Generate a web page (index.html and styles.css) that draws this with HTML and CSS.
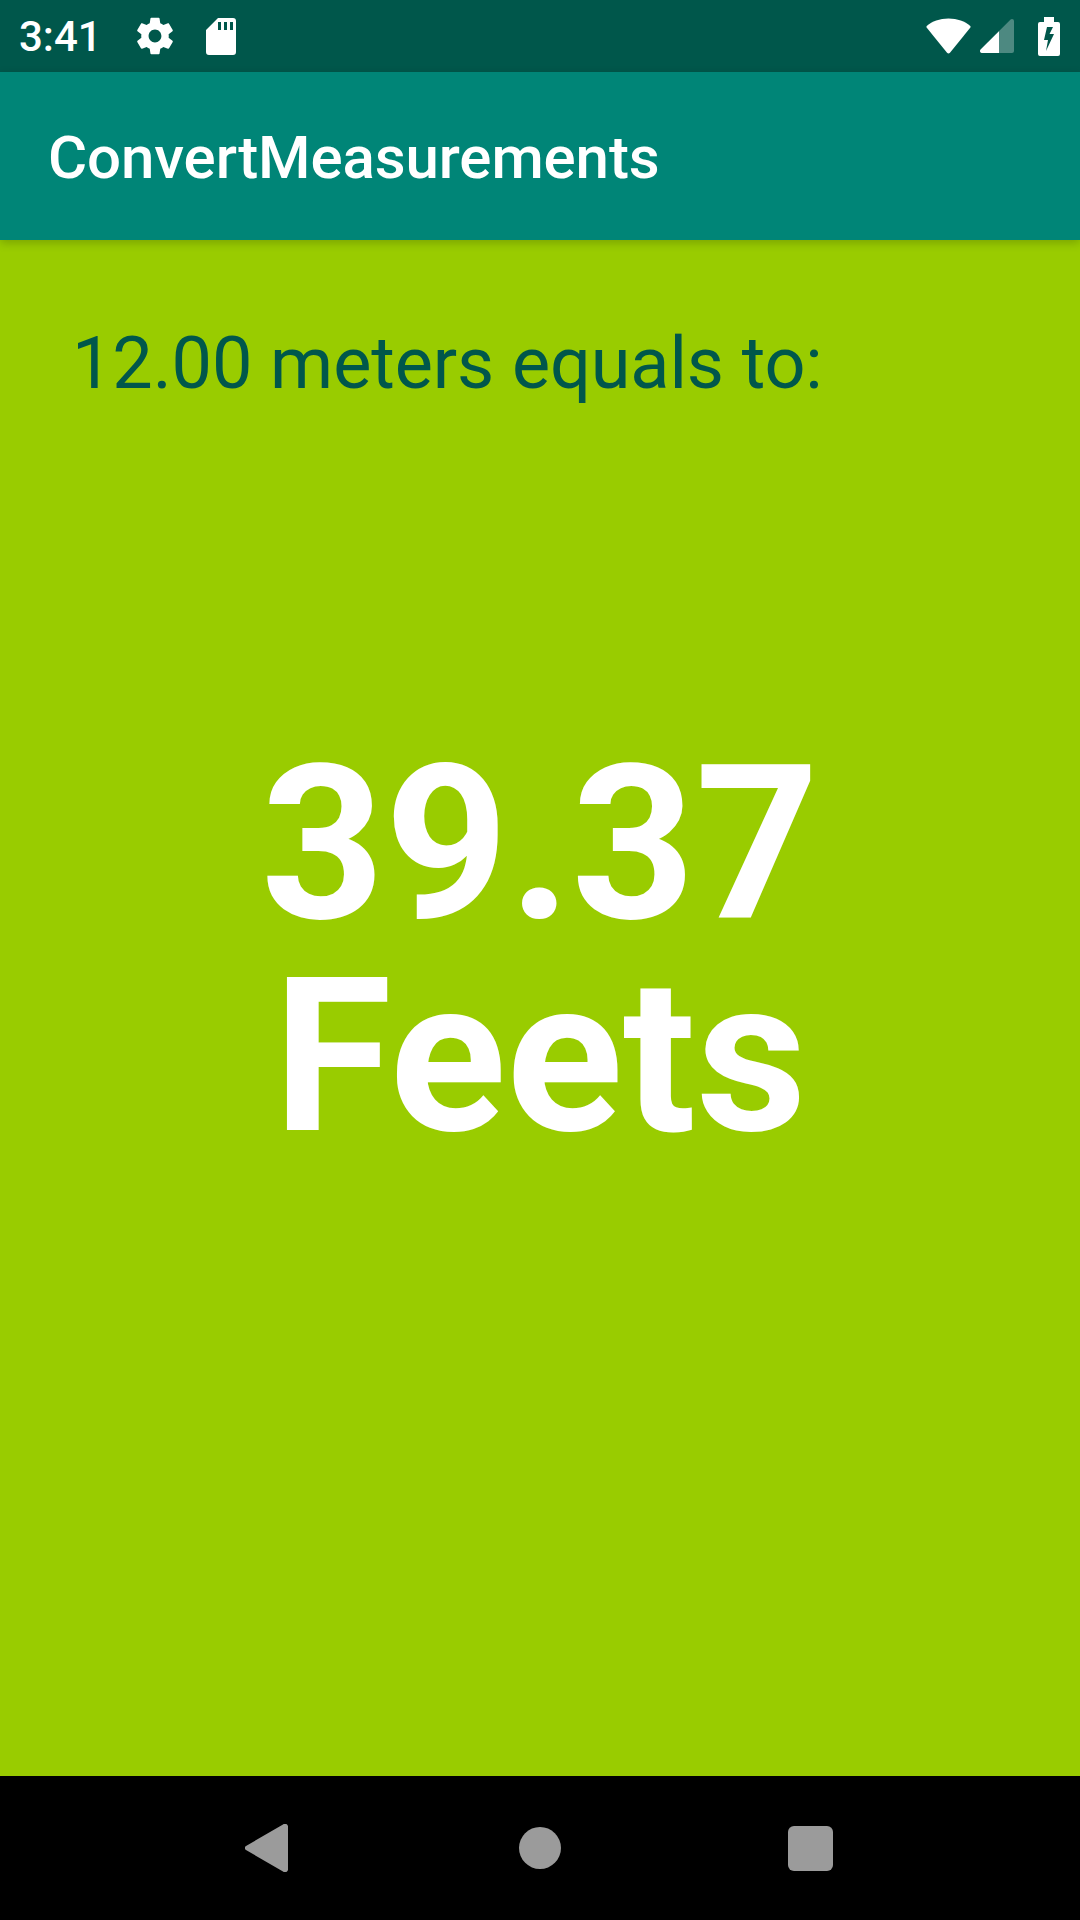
FILE: index.html
```html
<!DOCTYPE html>
<html lang="en">
<head>
  <meta charset="UTF-8" />
  <meta name="viewport" content="width=device-width, initial-scale=1.0">
  <title>ConvertMeasurements</title>
  <link rel="stylesheet" href="styles.css">
</head>
<body>
  <div class="screen">
    <!-- Barre de statut -->
    <div class="status-bar">
      <div class="status-left">
        <span class="clock">3:41</span>
        <svg class="icon-gear" viewBox="0 0 24 24"><path fill="#fff" d="M19.43 12.98c.04-.32.07-.64.07-.98s-.03-.66-.07-.98l2.11-1.65c.19-.15.24-.42.12-.64l-2-3.46c-.12-.22-.39-.3-.61-.22l-2.49 1c-.52-.4-1.08-.73-1.69-.98l-.38-2.65C14.46 2.18 14.25 2 14 2h-4c-.25 0-.46.18-.49.42l-.38 2.65c-.61.25-1.17.59-1.69.98l-2.49-1c-.23-.09-.49 0-.61.22l-2 3.46c-.13.22-.07.49.12.64l2.11 1.65c-.04.32-.07.65-.07.98s.03.66.07.98l-2.11 1.65c-.19.15-.24.42-.12.64l2 3.46c.12.22.39.3.61.22l2.49-1c.52.4 1.08.73 1.69.98l.38 2.65c.03.24.24.42.49.42h4c.25 0 .46-.18.49-.42l.38-2.65c.61-.25 1.17-.59 1.69-.98l2.49 1c.23.09.49 0 .61-.22l2-3.46c.12-.22.07-.49-.12-.64l-2.11-1.65zM12 15.5c-1.93 0-3.5-1.57-3.5-3.5s1.57-3.5 3.5-3.5 3.5 1.57 3.5 3.5-1.57 3.5-3.5 3.5z"/></svg>
        <svg class="icon-sd" viewBox="0 0 30 37"><path fill="#fff" fill-rule="evenodd" d="M12 0H27a3 3 0 0 1 3 3V34a3 3 0 0 1-3 3H3a3 3 0 0 1-3-3V12zM12 4v8h3V4zM18 4v8h3V4zM24 4v8h3V4z"/></svg>
      </div>
      <div class="status-right">
        <svg class="icon-wifi" viewBox="0 0 46 36"><path fill="#fff" d="M23 0C32 0 40 3 45 7.500a1.500 1.500 0 0 1 .2 2L24.500 35a2 2 0 0 1-3 0L.8 9.500a1.500 1.500 0 0 1 .2-2C6 3 14 0 23 0z"/></svg>
        <svg class="icon-signal" viewBox="0 0 34 34"><path fill="#fff" fill-opacity=".3" d="M32 0a2 2 0 0 1 2 2V32a2 2 0 0 1-2 2H2a2 2 0 0 1-1.400-3.400L30.600.6A2 2 0 0 1 32 0z"/><path fill="#fff" d="M19 12.200V34H2a2 2 0 0 1-1.400-3.400z"/></svg>
        <svg class="icon-battery" viewBox="0 0 22 39"><path fill="#fff" fill-rule="evenodd" d="M6 0H16V5H20a2 2 0 0 1 2 2V37a2 2 0 0 1-2 2H2a2 2 0 0 1-2-2V7a2 2 0 0 1 2-2H6zM9 10L6 23H10L8 34L16 17H11.500L15 10z"/></svg>
      </div>
    </div>

    <div class="app-bar">ConvertMeasurements</div>

    <div class="content">
      <p class="intro">12.00 meters equals to:</p>
      <p class="result">39.37<br>Feets</p>
    </div>

    <!-- Barre de navigation -->
    <div class="nav-bar">
      <svg class="nav-back" viewBox="0 0 43 48"><path fill="#9b9b9b" d="M1 26L38 47.500a3 3 0 0 0 5-2.500V3a3 3 0 0 0-5-2.500L1 22a2.300 2.300 0 0 0 0 4z"/></svg>
      <div class="nav-home"></div>
      <div class="nav-recent"></div>
    </div>
  </div>
</body>
</html>
```

FILE: styles.css
```css
html, body {
  margin: 0;
  padding: 0;
}

body {
  font-family: Roboto, sans-serif;
  background-color: #99cc00;
}

.screen {
  width: 1080px;
  height: 1920px;
  display: flex;
  flex-direction: column;
  overflow: hidden;
}

.status-bar {
  height: 72px;
  background-color: #00574b;
  color: #fff;
  display: flex;
  justify-content: space-between;
  align-items: center;
  padding: 0 20px 0 19px;
}

.status-left,
.status-right {
  display: flex;
  align-items: center;
}

.clock {
  font-size: 42px;
  font-weight: 500;
  width: 114px;
}

.icon-gear {
  width: 44px;
  height: 44px;
  margin-right: 29px;
}

.icon-sd {
  width: 30px;
  height: 37px;
}

.icon-wifi {
  width: 45px;
  height: 36px;
  margin-right: 9px;
}

.icon-signal {
  width: 34px;
  height: 34px;
  margin-right: 24px;
}

.icon-battery {
  width: 22px;
  height: 39px;
}

.app-bar {
  height: 168px;
  background-color: #008577;
  color: #fff;
  font-size: 60px;
  font-weight: 500;
  line-height: 172px;
  letter-spacing: -0.1px;
  padding-left: 48px;
  box-shadow: 0 3px 9px rgba(0, 0, 0, 0.2);
  position: relative;
}

.content {
  flex: 1;
  background-color: #99cc00;
  padding: 0 48px;
}

.intro {
  margin: 82px 0 0 24px;
  font-size: 72px;
  line-height: 84px;
  letter-spacing: -0.1px;
  color: #00574b;
}

.result {
  margin: 333px 0 0;
  font-size: 216px;
  font-weight: 700;
  line-height: 212px;
  color: #fff;
  text-align: center;
}

.nav-bar {
  height: 144px;
  background-color: #000;
  display: flex;
  align-items: center;
  padding-left: 245px;
}

.nav-back {
  width: 43px;
  height: 48px;
  margin-right: 231px;
}

.nav-home {
  width: 42px;
  height: 42px;
  border-radius: 50%;
  background-color: #9b9b9b;
  margin-right: 227px;
}

.nav-recent {
  width: 45px;
  height: 45px;
  border-radius: 6px;
  background-color: #9b9b9b;
}
```
